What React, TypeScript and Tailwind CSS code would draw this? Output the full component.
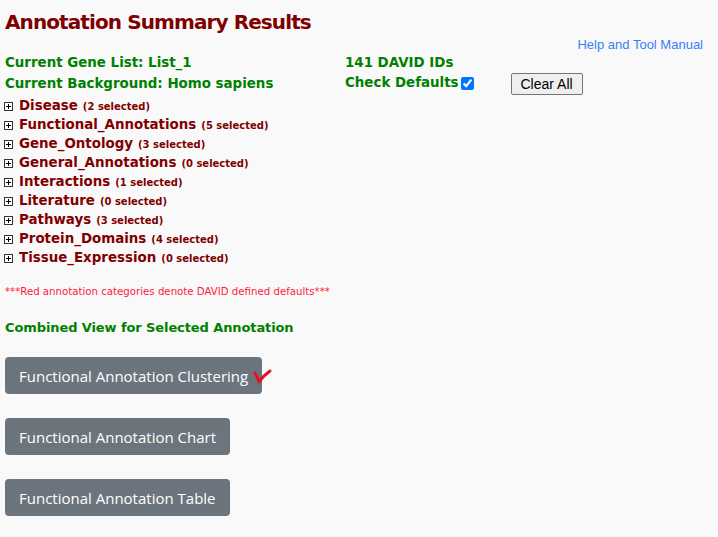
import React from 'react';

const verdana = { fontFamily: '"DejaVu Sans", Verdana, sans-serif' };

const categories = [
  ['Disease', 2],
  ['Functional_Annotations', 5],
  ['Gene_Ontology', 3],
  ['General_Annotations', 0],
  ['Interactions', 1],
  ['Literature', 0],
  ['Pathways', 3],
  ['Protein_Domains', 4],
  ['Tissue_Expression', 0],
] as const;

function PlusBox() {
  return (
    <svg width="9" height="9" viewBox="0 0 9 9" className="shrink-0">
      <rect x="0.5" y="0.5" width="8" height="8" fill="white" stroke="#333" />
      <path d="M2 4.5h5M4.5 2v5" stroke="#000" />
    </svg>
  );
}

export default function App() {
  return (
    <div className="w-[718px] h-[537px] bg-[#f9f9f9] overflow-hidden relative" style={verdana}>
      <div className="px-[5px] pt-[10px]">
        <h1 className="text-[20px] leading-[24px] font-bold text-[#800000] tracking-[-0.9px]">Annotation Summary Results</h1>

        <div className="flex justify-end pr-[10px] mt-[3px]">
          <a className="text-[13px] leading-[16px] text-[#3b7df8]" style={{ fontFamily: '"Liberation Sans", Arial, sans-serif' }}>
            Help and Tool Manual
          </a>
        </div>

        <div className="grid grid-cols-[340px_1fr] text-[13.4px] font-bold text-[#008000]">
          <div className="leading-[20px]">Current Gene List: List_1</div>
          <div className="leading-[20px]">141 DAVID IDs</div>
          <div className="leading-[22px] h-[21px] flex items-center">Current Background: Homo sapiens</div>
          <div className="flex items-center h-[21px]">
            <span>Check Defaults</span>
            <input type="checkbox" defaultChecked className="ml-[2px] w-[13px] h-[13px] accent-[#0075ff]" />
            <button
              className="self-start ml-[37px] h-[22px] px-[9px] text-[14px] font-normal text-black bg-[#efefef] border border-[#767676] rounded-[2px]"
              style={{ fontFamily: '"Liberation Sans", Arial, sans-serif' }}
            >
              Clear All
            </button>
          </div>
        </div>

        <ul className="mt-[3px]">
          {categories.map(([name, n]) => (
            <li key={name} className="flex items-center h-[19px] -ml-[1px]">
              <PlusBox />
              <span className="ml-[6px] text-[13.4px] font-bold text-[#800000]">{name}</span>
              <span className="ml-[5px] text-[10px] font-bold text-[#800000]">({n} selected)</span>
            </li>
          ))}
        </ul>

        <p className="mt-[17px] text-[10.2px] leading-[14px] text-[#ff1a3c]">
          ***Red annotation categories denote DAVID defined defaults***
        </p>

        <p className="mt-[21px] text-[13px] font-bold leading-[16px] text-[#008000] tracking-[-0.1px]">
          Combined View for Selected Annotation
        </p>

        <div className="mt-[21px] flex flex-col items-start gap-[24px]" style={{ fontFamily: '"Open Sans", "Segoe UI", sans-serif' }}>
          <div className="flex items-center">
            <button className="h-[37px] px-[14px] rounded-[4px] bg-[#6c757d] text-white text-[15px] leading-[24px]">
              Functional Annotation Clustering
            </button>
            <svg width="19" height="17" viewBox="0 0 19 17" className="-ml-[9px] mt-[2px]">
              <path d="M2 5 Q4 8 6 14 Q11 7 17 3" fill="none" stroke="#e8101c" strokeWidth="3" strokeLinecap="round" strokeLinejoin="round" />
            </svg>
          </div>
          <button className="h-[37px] px-[14px] rounded-[4px] bg-[#6c757d] text-white text-[15px] leading-[24px]">
            Functional Annotation Chart
          </button>
          <button className="h-[37px] px-[14px] rounded-[4px] bg-[#6c757d] text-white text-[15px] leading-[24px]">
            Functional Annotation Table
          </button>
        </div>
      </div>
    </div>
  );
}
